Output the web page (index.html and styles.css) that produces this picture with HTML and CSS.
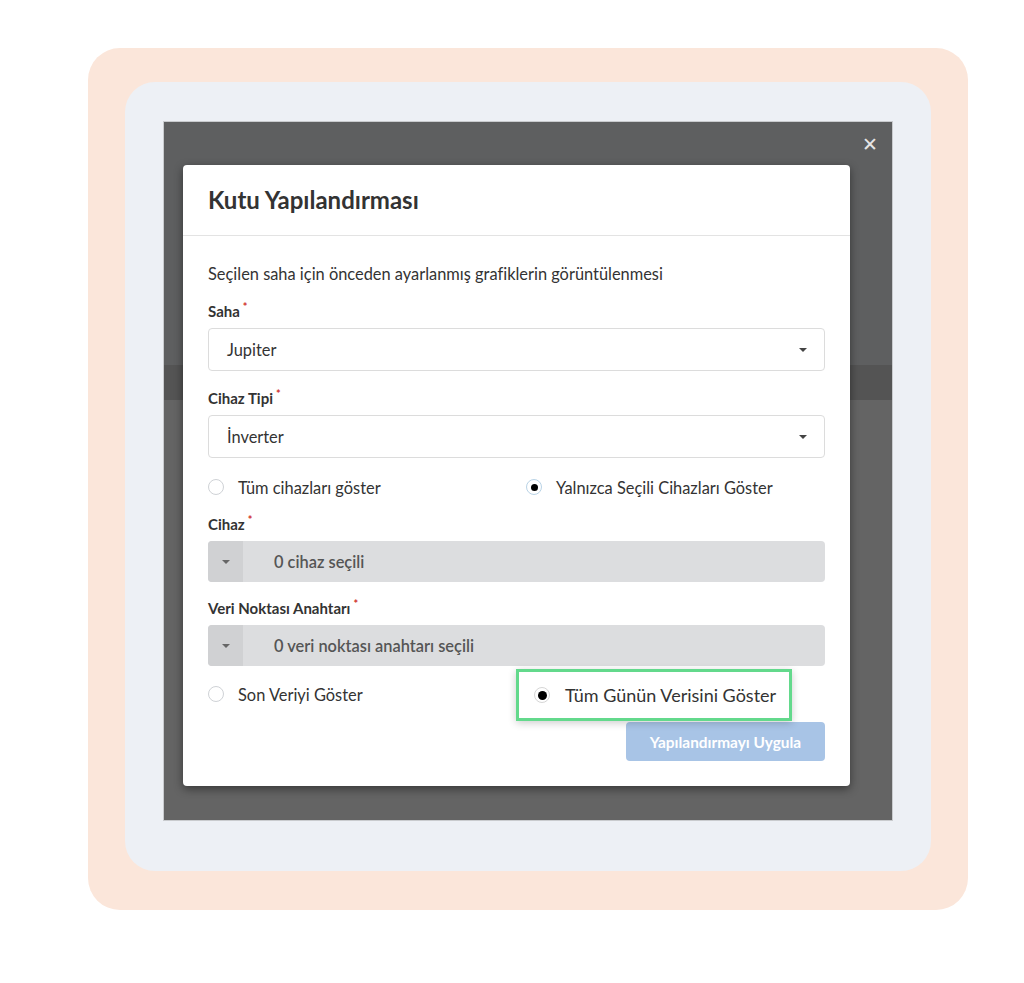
FILE: index.html
```html
<!doctype html>
<html lang="tr">
  <head>
    <meta charset="UTF-8" />
    <meta name="viewport" content="width=device-width, initial-scale=1.0" />
    <title>Kutu Yapılandırması</title>
    <link rel="stylesheet" href="styles.css">
  </head>
  <body>
    <div class="frame">
      <div class="card">
        <div class="screen">
          <div class="band band-top"></div>
          <div class="band band-mid"></div>
          <div class="band band-bottom"></div>

          <span class="close">&#x2715;</span>

          <div class="modal">
            <div class="modal-header">Kutu Yapılandırması</div>
            <div class="modal-body">
              <p class="desc">Seçilen saha için önceden ayarlanmış grafiklerin görüntülenmesi</p>

              <div class="label">Saha<span class="req">*</span></div>
              <div class="select">
                <span>Jupiter</span>
                <span class="caret"></span>
              </div>

              <div class="label">Cihaz Tipi<span class="req">*</span></div>
              <div class="select">
                <span>İnverter</span>
                <span class="caret"></span>
              </div>

              <div class="radios">
                <label class="radio"><span class="dot"></span>Tüm cihazları göster</label>
                <label class="radio"><span class="dot checked"></span>Yalnızca Seçili Cihazları Göster</label>
              </div>

              <div class="label">Cihaz<span class="req">*</span></div>
              <div class="multi">
                <span class="multi-toggle"><span class="caret"></span></span>
                <span class="multi-text">0 cihaz seçili</span>
              </div>

              <div class="label">Veri Noktası Anahtarı<span class="req">*</span></div>
              <div class="multi">
                <span class="multi-toggle"><span class="caret"></span></span>
                <span class="multi-text">0 veri noktası anahtarı seçili</span>
              </div>

              <div class="radios last">
                <label class="radio"><span class="dot"></span>Son Veriyi Göster</label>
                <div class="highlight">
                  <span class="dot checked big"></span>Tüm Günün Verisini Göster
                </div>
              </div>

              <div class="actions">
                <button class="apply">Yapılandırmayı Uygula</button>
              </div>
            </div>
          </div>
        </div>
      </div>
    </div>
  </body>
</html>
```

FILE: styles.css
```css
body {
  margin: 0;
  background: #fff;
  font-family: Lato, "Open Sans", sans-serif;
  color: #333;
}
.frame {
  margin: 48px 0 0 88px;
  width: 880px;
  height: 862px;
  box-sizing: border-box;
  padding: 34px 37px 39px 37px;
  background: #fbe6da;
  border-radius: 32px;
}
.card {
  height: 100%;
  box-sizing: border-box;
  padding: 40px 39px 51px 39px;
  background: #edf0f5;
  border-radius: 30px;
}
.screen {
  position: relative;
  height: 100%;
  display: flex;
  flex-direction: column;
  outline: 1px solid #c9cbce;
}
.band-top {
  height: 243px;
  background: #5e5f60;
}
.band-mid {
  height: 35px;
  background: #545454;
}
.band-bottom {
  flex: 1;
  background: #646464;
}
.close {
  position: absolute;
  top: 11px;
  right: 14px;
  color: #e6e6e6;
  font-size: 19px;
  font-weight: bold;
  font-family: "DejaVu Sans", sans-serif;
}
.modal {
  position: absolute;
  left: 19px;
  top: 43px;
  width: 667px;
  height: 621px;
  background: #fff;
  border-radius: 4px;
  box-shadow: 0 3px 10px rgba(0, 0, 0, 0.45);
}
.modal-header {
  height: 71px;
  box-sizing: border-box;
  padding: 20px 25px 0;
  font-size: 24px;
  font-weight: bold;
  color: #333;
  border-bottom: 1px solid #e3e3e3;
}
.modal-body {
  padding: 28px 25px 0;
  display: flex;
  flex-direction: column;
}
.desc {
  margin: 0 0 18px;
  font-size: 16.4px;
  line-height: 20px;
  color: #333;
}
.label {
  font-size: 15px;
  font-weight: bold;
  line-height: 18px;
  margin-bottom: 8px;
  color: #333;
}
.req {
  color: #d0312d;
  font-size: 11px;
  vertical-align: top;
  margin-left: 3px;
  position: relative;
  top: -4px;
}
.select {
  height: 43px;
  box-sizing: border-box;
  border: 1px solid #dcdcdc;
  border-radius: 4px;
  display: flex;
  align-items: center;
  justify-content: space-between;
  padding: 0 17px 0 18px;
  font-size: 16.4px;
  color: #333;
  margin-bottom: 18px;
}
.caret {
  width: 0;
  height: 0;
  border-left: 4px solid transparent;
  border-right: 4px solid transparent;
  border-top: 4px solid #444;
}
.radios {
  display: grid;
  grid-template-columns: 318px 1fr;
  height: 20px;
  align-items: center;
  margin-top: 1px;
  margin-bottom: 18px;
}
.radios.last {
  position: relative;
  margin-top: 1px;
  margin-bottom: 18px;
}
.radio {
  display: flex;
  align-items: center;
  font-size: 16.4px;
  color: #333;
}
.dot {
  width: 16px;
  height: 16px;
  border: 1px solid #cfd2d6;
  border-radius: 50%;
  margin-right: 14px;
  box-sizing: border-box;
  flex: none;
  display: flex;
  align-items: center;
  justify-content: center;
}
.dot.checked {
  border-color: #b9d3e6;
}
.dot.checked::after {
  content: "";
  width: 7px;
  height: 7px;
  border-radius: 50%;
  background: #000;
}
.multi {
  height: 41px;
  background: #dcdddf;
  border-radius: 4px;
  display: flex;
  align-items: center;
  margin-bottom: 17px;
  overflow: hidden;
}
.multi-toggle {
  width: 35px;
  height: 100%;
  background: #d0d1d3;
  display: flex;
  align-items: center;
  justify-content: center;
}
.multi-toggle .caret {
  border-top-color: #666;
}
.multi-text {
  margin-left: 31px;
  font-size: 16.4px;
  font-weight: 600;
  color: #555;
}
.highlight {
  position: absolute;
  left: 308px;
  top: -15px;
  width: 276px;
  height: 52px;
  box-sizing: border-box;
  border: 3px solid #63d98c;
  background: #fff;
  box-shadow: 0 2px 8px rgba(0, 0, 0, 0.2);
  display: flex;
  align-items: center;
  padding-left: 15px;
  font-size: 18px;
  color: #333;
}
.dot.big {
  width: 16px;
  height: 16px;
  margin-right: 15px;
  border-color: #d6d6d6;
}
.dot.big::after {
  width: 9px;
  height: 9px;
}
.actions {
  display: flex;
  justify-content: flex-end;
}
.apply {
  width: 199px;
  height: 39px;
  border: none;
  border-radius: 4px;
  background: #a8c4e6;
  color: #fff;
  font-family: Lato, sans-serif;
  font-size: 15.4px;
  font-weight: bold;
}
```
